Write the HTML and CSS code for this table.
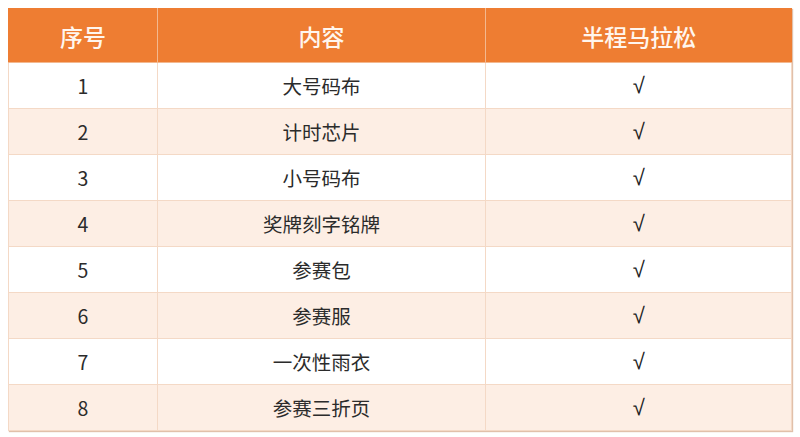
FILE: index.html
```html
<!DOCTYPE html>
<html lang="zh">
<head>
<meta charset="utf-8">
<link rel="stylesheet" href="styles.css">
</head>
<body>
<table class="kit">
  <colgroup>
    <col class="c1"><col class="c2"><col class="c3">
  </colgroup>
  <thead>
    <tr><th>序号</th><th>内容</th><th>半程马拉松</th></tr>
  </thead>
  <tbody>
    <tr><td>1</td><td>大号码布</td><td class="ok">√</td></tr>
    <tr><td>2</td><td>计时芯片</td><td class="ok">√</td></tr>
    <tr><td>3</td><td>小号码布</td><td class="ok">√</td></tr>
    <tr><td>4</td><td>奖牌刻字铭牌</td><td class="ok">√</td></tr>
    <tr><td>5</td><td>参赛包</td><td class="ok">√</td></tr>
    <tr><td>6</td><td>参赛服</td><td class="ok">√</td></tr>
    <tr><td>7</td><td>一次性雨衣</td><td class="ok">√</td></tr>
    <tr><td>8</td><td>参赛三折页</td><td class="ok">√</td></tr>
  </tbody>
</table>
</body>
</html>
```
FILE: styles.css
```css
html, body { margin: 0; padding: 0; background: #fff; }
body { padding: 8px; }
.kit {
  width: 784px;
  border-collapse: collapse;
  font-family: "Noto Sans CJK SC", "Noto Sans", sans-serif;
  color: #2b2b2b;
  box-shadow: 1px 1px 1px rgba(200, 140, 100, 0.55);
}
.c1 { width: 149px; }
.c2 { width: 329px; }
.c3 { width: 306px; }
.kit th {
  background: #ee7d32;
  color: #fff6ee;
  font-size: 23px;
  font-weight: 500;
  height: 53px;
  padding: 0;
  border: 1px solid #f3b88f;
  border-top-color: #ee7d32;
}
.kit th:first-child { border-left-color: #ee7d32; }
.kit th:last-child { border-right-color: #ee7d32; }
.kit td {
  height: 45px;
  padding: 0;
  text-align: center;
  font-size: 19.5px;
  border: 1px solid #f4d9c6;
}
.kit td.ok {
  font-family: "Liberation Sans", sans-serif;
  font-size: 22px;
  color: #222;
}
.kit tbody tr:nth-child(even) td { background: #fdeee4; }
.kit tbody tr:nth-child(odd) td { background: #ffffff; }
```
